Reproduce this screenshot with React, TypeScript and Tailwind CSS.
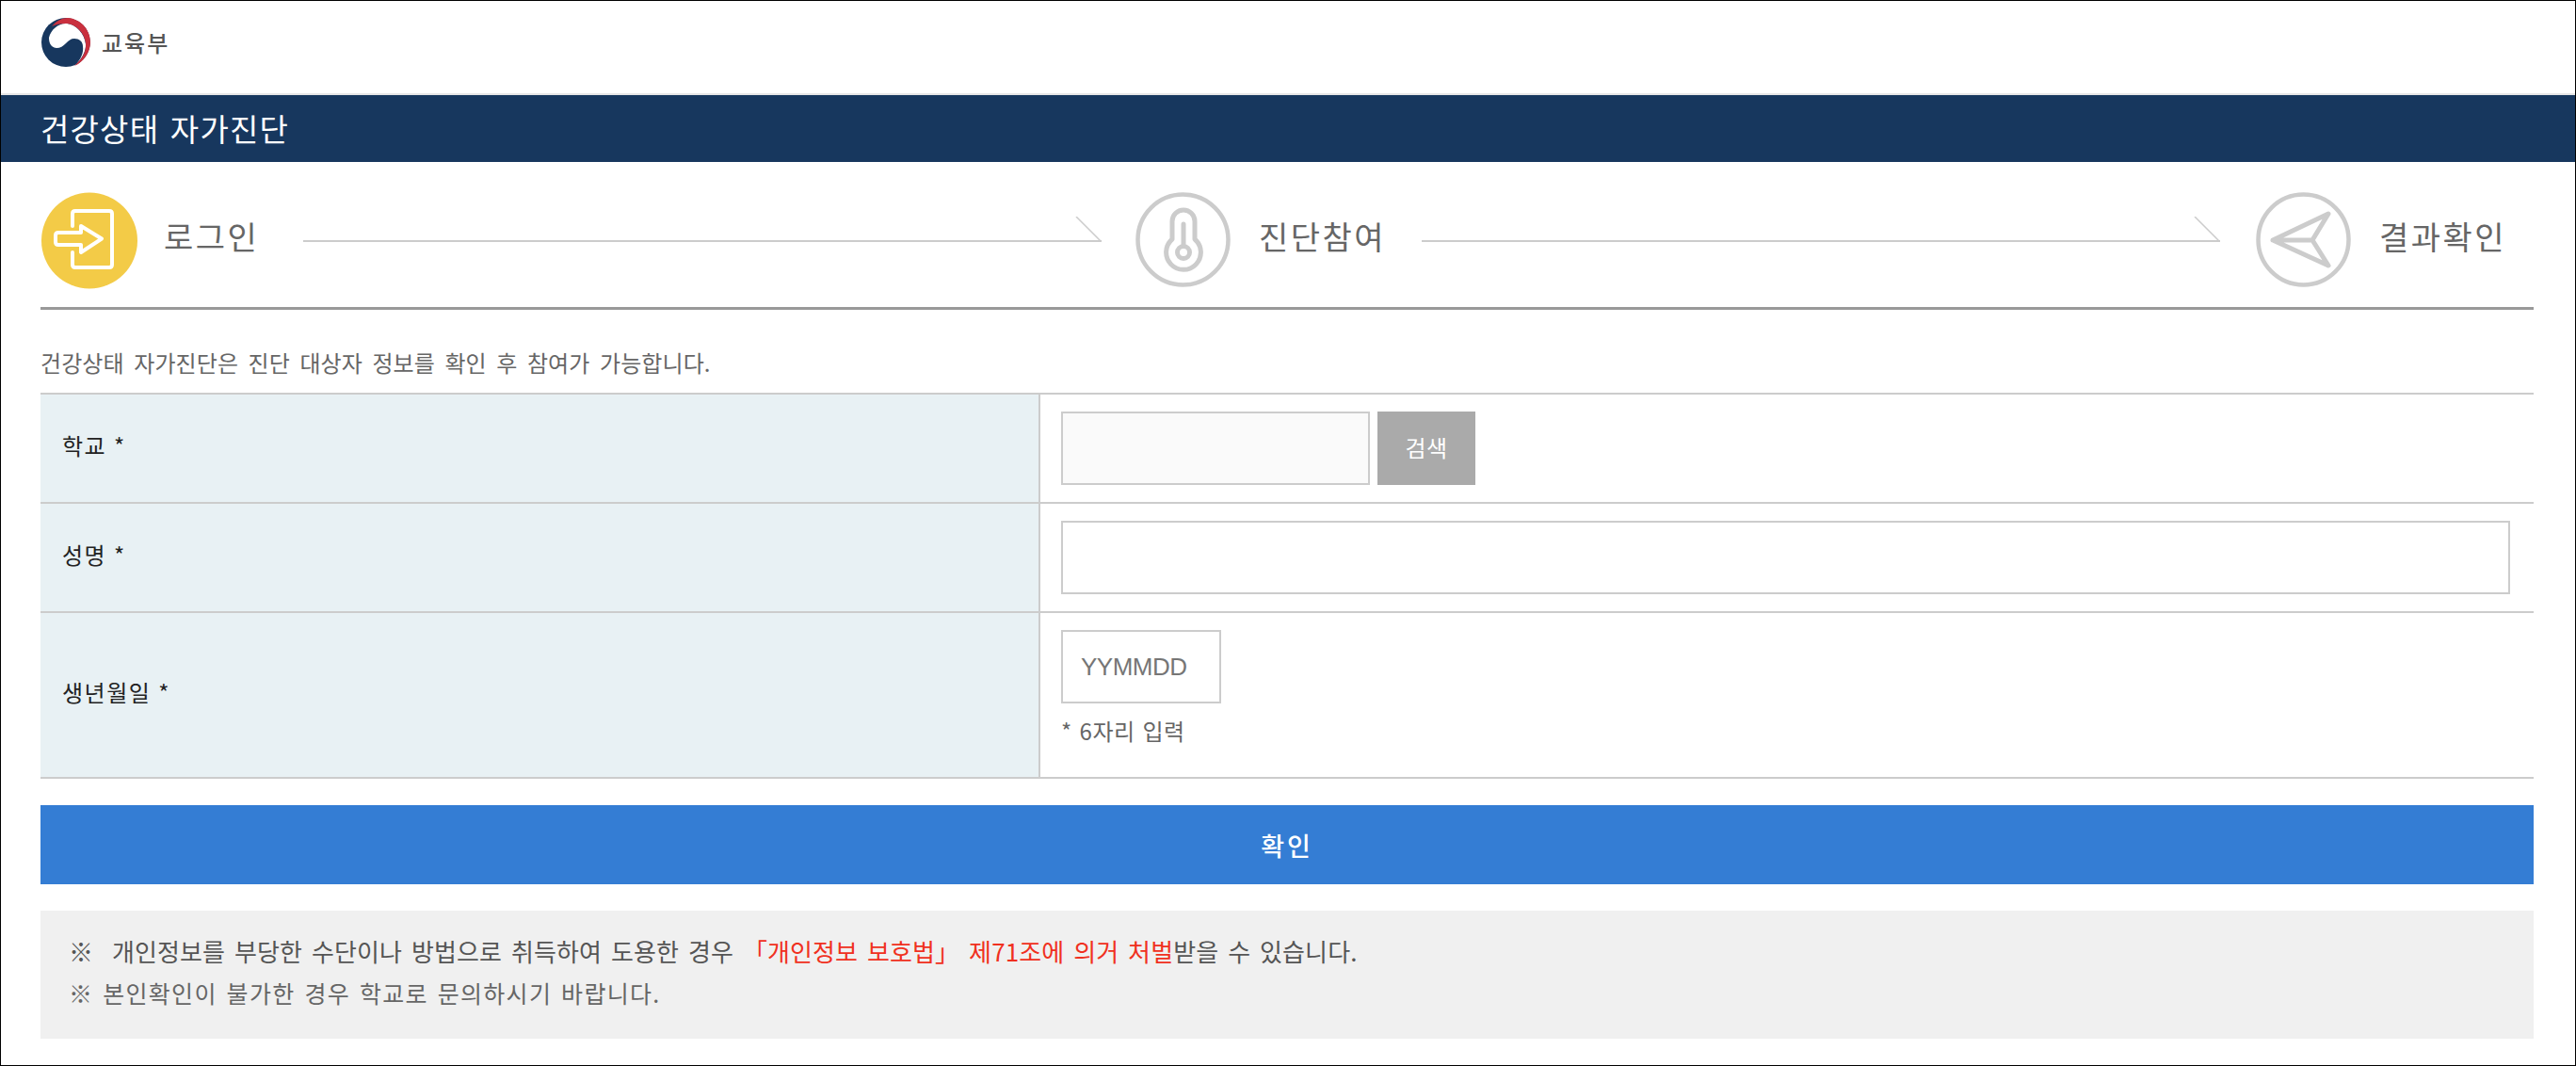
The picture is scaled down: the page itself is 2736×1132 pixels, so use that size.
const font = { fontFamily: '"Noto Sans CJK KR", "Liberation Sans", sans-serif' };

function Logo() {
  return (
    <svg width="54" height="54" viewBox="0 0 54 54" className="block">
      <circle cx="27" cy="27" r="26" fill="#17375e" />
      <path d="M36 52 C44 45 48.500 36 48 29 C47 18 38 8 28 7 C20 6 11 13 9 22 C9 26 10 32 17 33 C21 33 24 31 27 28 C30 25 32 23 36 23 C41 23 45 26 45 31 C46 38 43 45 36 52Z" fill="#ffffff" />
      <path d="M36 52.500 L54 52.500 L54 0 L29 0 L29 1 C44 2 53 14 53 27 C53 37 46 48 36 52.500Z" fill="#ffffff" />
      <path d="M12 10 C17 4 23 1 29 1 C43 2 53 14 53 27 C53 37 46 48 36 52 C44 45 49 37 48 28 C47 17 37 7 27 7 C21 7 16 8 12 10Z" fill="#c9303e" />
    </svg>
  );
}

function Circle({ active, children }: { active?: boolean; children: React.ReactNode }) {
  return (
    <div className="w-[103px] h-[103px] shrink-0">
      <svg width="103" height="103" viewBox="0 0 103 103" className="block">
        {active ? (
          <circle cx="52" cy="51.500" r="51" fill="#f3cb47" />
        ) : (
          <circle cx="50.500" cy="50.500" r="48" fill="none" stroke="#cccccc" strokeWidth="4.500" />
        )}
        {children}
      </svg>
    </div>
  );
}

function ArrowLine({ w }: { w: string }) {
  return (
    <div className={`relative h-[2px] bg-[#cccccc] ${w}`}>
      <svg className="absolute right-0 bottom-0" width="28" height="27" viewBox="0 0 28 27">
        <line x1="1" y1="0" x2="27" y2="26" stroke="#cccccc" strokeWidth="1.500" />
      </svg>
    </div>
  );
}

function Label({ children }: { children: React.ReactNode }) {
  return (
    <div className="w-[1062px] shrink-0 bg-[#e8f1f4] border-r-2 border-[#cccccc] pl-[23px] pb-[6px] flex items-center text-[24px] text-[#222222] tracking-[1.5px] [word-spacing:1px]">
      {children}
    </div>
  );
}

const stepText = "ml-[28px] mt-[23px] text-[34px] leading-[48px] text-[#666666] tracking-[2.5px] whitespace-nowrap";

export default function App() {
  return (
    <div style={font} className="w-[2736px] h-[1132px] bg-white border border-black overflow-hidden flex flex-col">
      <div className="h-[100px] shrink-0 pl-[42px] pb-[10px] flex items-center gap-[11px] border-b-2 border-[#e6e6e6]">
        <Logo />
        <span className="text-[24px] font-medium text-[#555555] tracking-[2px]">교육부</span>
      </div>
      <div className="h-[71px] shrink-0 bg-[#17375e] pl-[42px] flex items-center text-white text-[33px] tracking-[1.2px] [word-spacing:3px]">
        건강상태 자가진단
      </div>
      <div className="ml-[42px] mr-[44px] flex flex-col flex-1">
        <div className="h-[157px] shrink-0 border-b-[3px] border-[#999999] flex items-start pt-[32px]">
          <Circle active>
            <path d="M34 36 V23 Q34 20 37 20 H73 Q76 20 76 23 V77 Q76 80 73 80 H37 Q34 80 34 77 V64" fill="none" stroke="#ffffff" strokeWidth="4" strokeLinecap="round" />
            <path d="M19 43 H43 V36 L65 49.500 L43 64 V56 H19 Q16 56 16 53 V46 Q16 43 19 43Z" fill="none" stroke="#ffffff" strokeWidth="4" strokeLinejoin="round" />
          </Circle>
          <span className={`${stepText} w-[97px]`}>로그인</span>
          <div className="ml-[51px] mt-[51px]"><ArrowLine w="w-[848px]" /></div>
          <div className="ml-[36px]">
            <Circle>
              <path d="M39 50 V31 A12 12 0 0 1 63 31 V50 A18.400 18.400 0 1 1 39 50Z" fill="none" stroke="#cccccc" strokeWidth="5" strokeLinejoin="round" />
              <circle cx="51" cy="64" r="6.500" fill="none" stroke="#cccccc" strokeWidth="5" />
              <line x1="51" y1="34" x2="51" y2="56" stroke="#cccccc" strokeWidth="5" strokeLinecap="round" />
            </Circle>
          </div>
          <span className={`${stepText} w-[129px]`}>진단참여</span>
          <div className="ml-[44px] mt-[51px]"><ArrowLine w="w-[848px]" /></div>
          <div className="ml-[38px]">
            <Circle>
              <path d="M18 51 L77 23 L60 51 L77 78 Z M18 51 H60" fill="none" stroke="#cccccc" strokeWidth="5" strokeLinejoin="round" strokeLinecap="round" />
            </Circle>
          </div>
          <span className={stepText}>결과확인</span>
        </div>
        <p className="mt-[38px] mb-[14px] text-[24px] leading-[36px] h-[36px] text-[#666666] tracking-[0.1px] [word-spacing:5px]">
          건강상태 자가진단은 진단 대상자 정보를 확인 후 참여가 가능합니다.
        </p>
        <div className="border-t-2 border-[#cccccc]">
          <div className="flex h-[116px] border-b-2 border-[#cccccc]">
            <Label>학교 *</Label>
            <div className="flex-1 flex items-center pl-[22px] gap-[8px]">
              <div className="w-[328px] h-[78px] border-2 border-[#cccccc] bg-[#fafafa]" />
              <button className="w-[104px] h-[78px] bg-[#aaaaaa] text-white text-[24px] tracking-[0.5px] pb-[2px]">검색</button>
            </div>
          </div>
          <div className="flex h-[116px] border-b-2 border-[#cccccc]">
            <Label>성명 *</Label>
            <div className="flex-1 flex items-center pl-[22px] pr-[25px]">
              <div className="w-full h-[78px] border-2 border-[#cccccc] bg-white" />
            </div>
          </div>
          <div className="flex h-[176px] border-b-2 border-[#cccccc]">
            <Label>생년월일 *</Label>
            <div className="flex-1 pl-[22px] pt-[18px]">
              <div className="w-[170px] h-[78px] border-2 border-[#cccccc] flex items-center pl-[19px] text-[26px] text-[#767676] tracking-[-0.5px] font-['Liberation_Sans']">YYMMDD</div>
              <p className="mt-[11px] text-[24px] leading-[36px] text-[#666666] tracking-[0.5px] [word-spacing:2px]">* 6자리 입력</p>
            </div>
          </div>
        </div>
        <button className="mt-[28px] h-[84px] shrink-0 bg-[#347dd4] text-white text-[27px] font-medium tracking-[3px] pt-[2px]">확인</button>
        <div className="mt-[28px] h-[136px] shrink-0 bg-[#f0f0f0] pl-[30px] pt-[21px] text-[#666666]">
          <p className="text-[26px] leading-[43px] text-[#555555] tracking-[0.1px] [word-spacing:4px]">※&nbsp;&nbsp;개인정보를 부당한 수단이나 방법으로 취득하여 도용한 경우 <span className="text-[#f03020]">「개인정보 보호법」 제71조에 의거 처벌</span>받을 수 있습니다.</p>
          <p className="mt-[2px] text-[25px] leading-[43px] tracking-[1.3px] [word-spacing:3px]">※&nbsp;본인확인이 불가한 경우 학교로 문의하시기 바랍니다.</p>
        </div>
      </div>
    </div>
  );
}
